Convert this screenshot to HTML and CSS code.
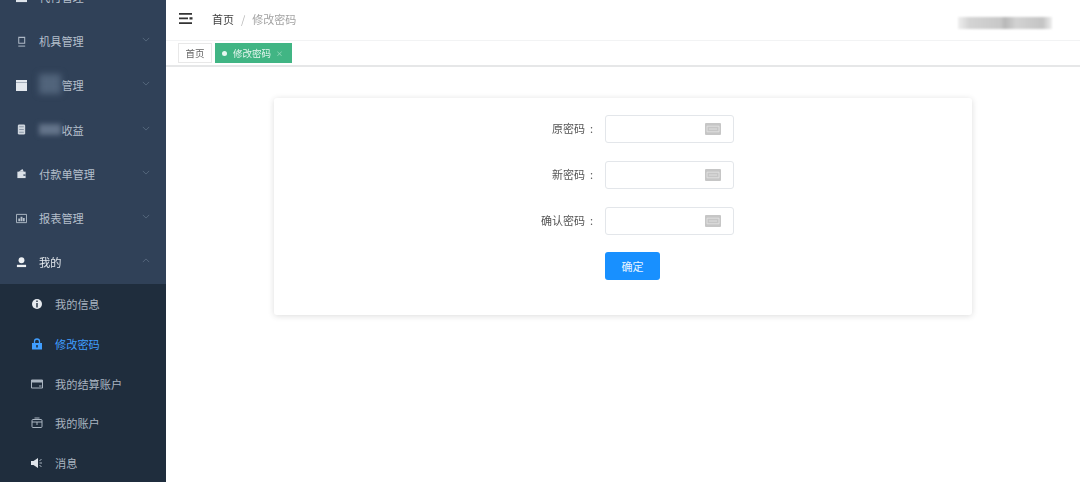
FILE: index.html
```html
<!DOCTYPE html>
<html lang="zh-CN">
<head>
<meta charset="utf-8">
<title>修改密码</title>
<link rel="stylesheet" href="styles.css">
</head>
<body>
<div class="app">
  <aside class="sidebar">
    <ul class="menu">
      <li class="item"><svg class="ic" viewBox="0 0 12 12"><path fill="#dfe5ec" d="M0 1h12v10H0z"/></svg><span>代付管理</span><svg class="chev" viewBox="0 0 10 6"><path d="M1 1l4 4 4-4"/></svg></li>
      <li class="item"><svg class="ic" viewBox="0 0 12 12"><path fill="none" stroke="#aeb9c6" stroke-width="1.1" d="M3 1.5h6.5v6.5H3z"/><path stroke="#aeb9c6" stroke-width="1.1" d="M2.5 11h7.5"/></svg><span>机具管理</span><svg class="chev" viewBox="0 0 10 6"><path d="M1 1l4 4 4-4"/></svg></li>
      <li class="item"><svg class="ic" viewBox="0 0 12 12"><path fill="#e3e8ee" d="M0 0h12v12H0z"/><path fill="#8d99a8" d="M0 2.2h12v.8H0z"/></svg><span class="masked"><i class="smudge smudge-a"></i>管理</span><svg class="chev" viewBox="0 0 10 6"><path d="M1 1l4 4 4-4"/></svg></li>
      <li class="item"><svg class="ic" viewBox="0 0 12 12"><rect x="2" y="0.5" width="8" height="11" rx="1.5" fill="#cfd6de"/><path stroke="#67768a" stroke-width=".7" d="M3.5 3h5M3.5 6h5M3.5 9h5"/></svg><span class="masked"><i class="smudge smudge-b"></i>收益</span><svg class="chev" viewBox="0 0 10 6"><path d="M1 1l4 4 4-4"/></svg></li>
      <li class="item"><svg class="ic" viewBox="0 0 12 12"><path fill="#dbe1e8" d="M1.5 4h9v7h-9z"/><path fill="#dbe1e8" d="M3 4l4-3 1.5 3z"/><path fill="#3a4c63" d="M8 7h2.5v1.5H8z"/></svg><span>付款单管理</span><svg class="chev" viewBox="0 0 10 6"><path d="M1 1l4 4 4-4"/></svg></li>
      <li class="item"><svg class="ic" viewBox="0 0 12 12"><path fill="none" stroke="#b4bec9" d="M.5 1.5h11v9H.5z"/><path fill="#b4bec9" d="M2.5 6h2v3h-2zM5 4h2v5H5zM7.5 5.5h2V9h-2z"/></svg><span>报表管理</span><svg class="chev" viewBox="0 0 10 6"><path d="M1 1l4 4 4-4"/></svg></li>
      <li class="item open"><svg class="ic" viewBox="0 0 12 12"><circle cx="6" cy="3.5" r="3.2" fill="#eef1f4"/><path fill="#eef1f4" d="M1 8.5h10V11H1z"/></svg><span>我的</span><svg class="chev" viewBox="0 0 10 6"><path d="M1 5l4-4 4 4"/></svg></li>
    </ul>
    <ul class="submenu">
      <li class="sub"><svg class="ic" viewBox="0 0 12 12"><circle cx="6" cy="6" r="5" fill="#e6eaef"/><path fill="#1f2d3d" d="M5.3 2.5h1.4v1.4H5.3zM5.3 5h1.4v4.4H5.3z"/></svg><span>我的信息</span></li>
      <li class="sub active"><svg class="ic" viewBox="0 0 12 12"><path fill="none" stroke="#409eff" stroke-width="1.3" d="M3.5 5.5V3.5a2.5 2.5 0 0 1 5 0v2"/><path fill="#409eff" d="M1 5h10v6.5H1z"/><path fill="#1f2d3d" d="M5.2 7h1.6v2.4H5.2z"/></svg><span>修改密码</span></li>
      <li class="sub"><svg class="ic" viewBox="0 0 12 12"><path fill="none" stroke="#aab5c1" d="M.5 2h11v8H.5z"/><path fill="#aab5c1" d="M.5 2h11v2.4H.5zM8 7.5h2.5v1H8z"/></svg><span>我的结算账户</span></li>
      <li class="sub"><svg class="ic" viewBox="0 0 12 12"><rect x="1" y="2.5" width="10" height="8" rx="1" fill="none" stroke="#aab5c1"/><path stroke="#aab5c1" d="M1 5h10M6 5v3M3.5 1h5"/></svg><span>我的账户</span></li>
      <li class="sub"><svg class="ic" viewBox="0 0 12 12"><path fill="#dfe4ea" d="M0 4h2.5L7 1v10L2.5 8H0z"/><path stroke="#aab5c1" d="M8.5 3.5l2-1M8.5 6h2.5M8.5 8.5l2 1"/></svg><span>消息</span></li>
    </ul>
  </aside>
  <main class="main">
    <header class="topbar">
      <svg class="toggle" viewBox="0 0 14 11"><path fill="#333" d="M0 0h13v1.7H0zM0 4.5h9v1.7H0zM0 9.2h13v1.7H0zM10.5 4.2h3v2.4h-3z"/></svg>
      <nav class="crumbs"><b>首页</b><em>/</em><span>修改密码</span></nav>
      <div class="account"></div>
    </header>
    <div class="tabs">
      <div class="tab">首页</div>
      <div class="tab current"><i class="dot"></i>修改密码<small>×</small></div>
    </div>
    <section class="content">
      <form class="card">
        <div class="row"><label>原密码<i class="colon">:</i></label><div class="field"><svg class="kbd" viewBox="0 0 16 12"><use href="#kb"/></svg></div></div>
        <div class="row"><label>新密码<i class="colon">:</i></label><div class="field"><svg class="kbd" viewBox="0 0 16 12"><use href="#kb"/></svg></div></div>
        <div class="row"><label>确认密码<i class="colon">:</i></label><div class="field"><svg class="kbd" viewBox="0 0 16 12"><use href="#kb"/></svg></div></div>
        <div class="row actions"><button type="button" class="btn">确定</button></div>
      </form>
    </section>
  </main>
</div>
<svg class="defs" width="0" height="0"><defs><g id="kb"><rect width="16" height="12" rx="1" fill="#c6c6c6"/><path fill="none" stroke="#e6e6e6" stroke-width=".8" d="M2 3.2h12v5.6H2z"/><path stroke="#e6e6e6" stroke-width=".8" d="M4 6h8"/></g></defs></svg>
</body>
</html>
```
FILE: styles.css
```css
* { box-sizing: border-box; }
html, body { margin: 0; height: 100%; overflow: hidden; }
body { font-family: "Noto Sans CJK SC", "Noto Sans", sans-serif; font-size: 11px; color: #555; background: #fff; }
ul { list-style: none; margin: 0; padding: 0; }
.defs { position: absolute; }

.app { display: flex; height: 482px; filter: blur(.4px); }

.sidebar { width: 166px; flex: none; background: #304158; overflow: hidden; }
.menu { margin-top: -25px; }
.item { position: relative; height: 44.2px; display: flex; align-items: center; padding-left: 16px; color: #b4bfcb; font-size: 11.2px; }
.item .ic { width: 11px; height: 11px; margin-right: 12px; flex: none; }
.item.open { color: #e4e9ee; }
.chev { position: absolute; right: 16px; top: 50%; width: 8px; height: 5px; margin-top: -4px; fill: none; stroke: #56677c; stroke-width: 1.2; }
.masked { display: flex; align-items: center; }
.smudge { display: block; flex: none; width: 22.4px; height: 14px; }
.smudge-a { background: #51647b; filter: blur(3px); height: 20px; margin-top: -2px; }
.smudge-b { background: #64748a; filter: blur(2.5px); height: 11px; width: 22.4px; margin-top: -1px; }

.submenu { background: #1f2d3d; height: 198px; }
.sub { height: 39.7px; display: flex; align-items: center; padding-left: 31px; color: #a9b4c0; font-size: 11.2px; }
.sub .ic { width: 12px; height: 12px; margin-right: 12px; flex: none; }
.sub.active { color: #409eff; }

.main { flex: 1; min-width: 0; display: flex; flex-direction: column; }
.topbar { position: relative; height: 41px; flex: none; display: flex; align-items: center; padding-left: 13px; border-bottom: 1px solid #f2f3f4; }
.toggle { width: 14px; height: 11px; margin-right: 19px; margin-top: -3px; }
.crumbs { display: flex; align-items: center; font-size: 11px; margin-top: -2px; }
.crumbs b { font-weight: 400; color: #444; }
.crumbs em { font-style: normal; color: #bbb; margin: 0 7px; }
.crumbs span { color: #a3a3a3; }
.account { position: absolute; left: 792px; top: 17px; width: 94px; height: 12px; background: linear-gradient(90deg, #eeeeee 0, #d4d4d4 12%, #c8c8c8 45%, #b8b8b8 50%, #d2d2d2 62%, #c4c4c4 90%, #eeeeee 100%); filter: blur(1px); }

.tabs { height: 26px; flex: none; display: flex; align-items: flex-start; gap: 3px; padding: 2px 0 0 12px; border-bottom: 2px solid #e6e7e8; }
.tab { height: 20px; width: 34px; justify-content: center; display: flex; align-items: center; font-size: 9.5px; color: #666; border: 1px solid #e8e8e8; background: #fff; }
.tab.current { background: #41b584; border-color: #41b584; color: #e6f6ef; justify-content: flex-start; padding-left: 6px; width: 77px; }
.dot { width: 5px; height: 5px; margin-right: 6px; border-radius: 50%; background: #e8f7f0; }
.tab small { font-size: 7px; margin-left: 5px; color: #a8e0c8; }

.content { flex: 1; padding: 31px 0 0 108px; }
.card { width: 698px; height: 217px; padding-top: 17px; background: #fff; border-radius: 3px; box-shadow: 0 1px 6px rgba(0, 0, 0, .14); display: flex; flex-direction: column; gap: 18px; }
.row { display: flex; align-items: center; height: 28px; padding-left: 230px; }
.row label { width: 101px; padding-right: 12px; margin-top: -2px; text-align: right; font-size: 11px; color: #555; white-space: nowrap; }
.colon { font-style: normal; margin-left: 5px; }
.field { width: 129px; height: 28px; display: flex; align-items: center; justify-content: flex-end; padding-right: 12px; border: 1px solid #e3e6ea; border-radius: 3px; background: #fff; }
.kbd { width: 16px; height: 12px; }
.actions { padding-left: 331px; margin-top: -1px; }
.btn { width: 55px; height: 28px; border: 0; padding: 0 0 1px; border-radius: 3px; background: #1890ff; color: #e8f4ff; font: 11px "Noto Sans CJK SC", sans-serif; }
```
